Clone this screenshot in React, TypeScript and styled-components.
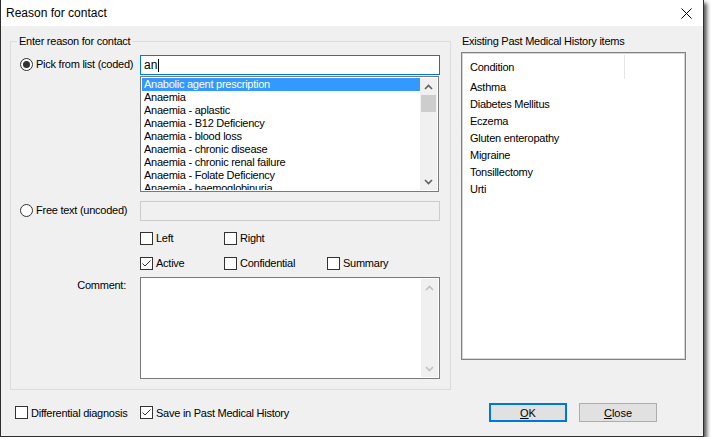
import React from 'react';
import styled, { createGlobalStyle } from 'styled-components';

const GlobalStyle = createGlobalStyle`
  html, body {
    margin: 0;
    padding: 0;
    background: #ffffff;
  }
  body {
    font-family: "Liberation Sans", Arial, sans-serif;
    font-size: 11px;
    letter-spacing: -0.25px;
    color: #000;
  }
  * {
    box-sizing: border-box;
  }
`;

const Window = styled.div`
  width: 704px;
  height: 437px;
  display: flex;
  flex-direction: column;
  background: #f0f0f0;
  border: 1px solid #2e2e2e;
  border-top: none;
  box-shadow: 3px 3px 4px rgba(0, 0, 0, 0.65);
`;

const TitleBar = styled.div`
  height: 26px;
  flex-shrink: 0;
  display: flex;
  align-items: center;
  justify-content: space-between;
  padding: 0 11px 0 5px;
  background: #ffffff;
  font-size: 12px;
  letter-spacing: 0;
`;

const Body = styled.div`
  flex: 1;
  display: flex;
  flex-direction: column;
  padding: 8px 0 0 9px;
`;

const MainRow = styled.div`
  display: flex;
  gap: 10px;
  align-items: flex-start;
`;

const GroupBox = styled.fieldset`
  margin: 0;
  padding: 0;
  min-width: 0;
  width: 441px;
  height: 356px;
  border: 1px solid #dcdcdc;
`;

const GroupLegend = styled.legend`
  margin-left: 6px;
  padding: 0 2px;
  line-height: 14px;
`;

const Form = styled.div`
  display: flex;
  flex-direction: column;
  padding: 7px 0 0 9px;
`;

const FormRow = styled.div<{ $mt?: number }>`
  display: grid;
  grid-template-columns: 120px 300px;
  align-items: start;
  margin-top: ${({ $mt }) => $mt ?? 0}px;
`;

const OptionLabel = styled.label`
  height: 20px;
  display: flex;
  align-items: center;
  gap: 3px;
  margin-top: -1px;
  white-space: nowrap;
`;

const RadioDot = styled.span<{ $on?: boolean }>`
  width: 13px;
  height: 13px;
  border-radius: 50%;
  border: 1px solid #333;
  background: #fff;
  display: flex;
  align-items: center;
  justify-content: center;
  &::after {
    content: '';
    width: 7px;
    height: 7px;
    border-radius: 50%;
    background: #333;
    display: ${({ $on }) => ($on ? 'block' : 'none')};
  }
`;

const Combo = styled.div`
  display: flex;
  flex-direction: column;
`;

const TextBox = styled.div<{ $focused?: boolean; $disabled?: boolean }>`
  height: 20px;
  display: flex;
  align-items: center;
  padding-left: 3px;
  border: 1px solid ${({ $focused, $disabled }) =>
    $focused ? '#0078d7' : $disabled ? '#cccccc' : '#7a7a7a'};
  background: ${({ $disabled }) => ($disabled ? '#f0f0f0' : '#fff')};
  font-size: 12px;
  letter-spacing: 0;
`;

const Caret = styled.span`
  width: 1px;
  height: 13px;
  background: #000;
  margin-left: 1px;
`;

const DropList = styled.div`
  width: 299px;
  height: 116px;
  margin-top: 1px;
  border: 1px solid #7a7a7a;
  background: #fff;
  display: flex;
  padding: 1px;
  overflow: hidden;
`;

const DropItems = styled.div`
  flex: 1;
  overflow: hidden;
`;

const DropItem = styled.div<{ $selected?: boolean }>`
  height: 13px;
  line-height: 13px;
  padding-left: 2px;
  white-space: nowrap;
  background: ${({ $selected }) => ($selected ? '#3399ff' : 'transparent')};
  color: ${({ $selected }) => ($selected ? '#fff' : '#000')};
`;

const ScrollBar = styled.div`
  width: 17px;
  display: flex;
  flex-direction: column;
  background: #f0f0f0;
`;

const ScrollArrow = styled.div`
  height: 17px;
  display: flex;
  align-items: center;
  justify-content: center;
`;

const ScrollTrack = styled.div`
  flex: 1;
  display: flex;
  flex-direction: column;
  align-items: center;
`;

const ScrollThumb = styled.div`
  width: 15px;
  height: 17px;
  background: #cdcdcd;
`;

const CheckRow = styled.div`
  display: grid;
  grid-template-columns: 84px 103px auto;
  height: 16px;
  align-items: center;
`;

const CheckLabel = styled.label<{ $width?: number }>`
  display: flex;
  align-items: center;
  gap: 3px;
  white-space: nowrap;
  ${({ $width }) => ($width ? `width: ${$width}px;` : '')}
`;

const Box = styled.span`
  width: 13px;
  height: 13px;
  border: 1px solid #333;
  background: #fff;
  display: flex;
  align-items: center;
  justify-content: center;
`;

const FieldLabel = styled.div`
  text-align: right;
  padding: 2px 14px 0 0;
`;

const CommentBox = styled.div`
  height: 102px;
  border: 1px solid #7a7a7a;
  background: #fff;
  display: flex;
  justify-content: flex-end;
  padding: 1px;
`;

const SidePanel = styled.div`
  width: 225px;
  display: flex;
  flex-direction: column;
`;

const SideTitle = styled.div`
  height: 14px;
  line-height: 14px;
  margin-left: 1px;
  white-space: nowrap;
`;

const ListView = styled.div`
  height: 308px;
  margin-top: 4px;
  border: 1px solid #828282;
  box-shadow: inset 0 0 0 1px #d4d4d4;
  background: #fff;
  padding: 1px;
`;

const ListHeader = styled.div`
  height: 25px;
  display: flex;
`;

const HeaderCell = styled.div`
  width: 162px;
  display: flex;
  align-items: center;
  padding: 0 0 1px 7px;
  border-right: 1px solid #e5e5e5;
  margin: 1px 0 0;
`;

const ListRow = styled.div`
  height: 17px;
  line-height: 17px;
  padding-left: 7px;
`;

const Footer = styled.div`
  display: flex;
  align-items: center;
  height: 19px;
  margin-top: 13px;
  padding: 0 46px 0 5px;
`;

const Buttons = styled.div`
  margin-left: auto;
  display: flex;
  gap: 12px;
`;

const PushButton = styled.button<{ $default?: boolean }>`
  width: 78px;
  height: 19px;
  padding: 0;
  font: inherit;
  color: #000;
  background: #e1e1e1;
  border: 1px solid ${({ $default }) => ($default ? '#0078d7' : '#adadad')};
  box-shadow: ${({ $default }) => ($default ? 'inset 0 0 0 1px #0078d7' : 'none')};
  u {
    text-decoration: underline;
  }
`;

function CloseGlyph() {
  return (
    <svg width="11" height="11" viewBox="0 0 11 11">
      <path d="M0.5 0.5 L10.5 10.5 M10.5 0.5 L0.5 10.5" stroke="#000" strokeWidth="1" />
    </svg>
  );
}

function Chevron({ up, color }: { up?: boolean; color: string }) {
  return (
    <svg width="9" height="6" viewBox="0 0 9 6">
      <path
        d={up ? 'M1 5 L4.5 1.5 L8 5' : 'M1 1 L4.5 4.5 L8 1'}
        stroke={color}
        strokeWidth="1.6"
        fill="none"
      />
    </svg>
  );
}

function Tick() {
  return (
    <svg width="11" height="11" viewBox="0 0 11 11">
      <path d="M1.5 5.5 L4 8 L9.5 2.5" stroke="#333" strokeWidth="1" fill="none" />
    </svg>
  );
}

function Check({ label, checked, width }: { label: string; checked?: boolean; width?: number }) {
  return (
    <CheckLabel $width={width}>
      <Box>{checked && <Tick />}</Box>
      {label}
    </CheckLabel>
  );
}

const matches = [
  'Anabolic agent prescription',
  'Anaemia',
  'Anaemia - aplastic',
  'Anaemia - B12 Deficiency',
  'Anaemia - blood loss',
  'Anaemia - chronic disease',
  'Anaemia - chronic renal failure',
  'Anaemia - Folate Deficiency',
  'Anaemia - haemoglobinuria',
];

const history = [
  'Asthma',
  'Diabetes Mellitus',
  'Eczema',
  'Gluten enteropathy',
  'Migraine',
  'Tonsillectomy',
  'Urti',
];

export default function App() {
  return (
    <>
      <GlobalStyle />
      <Window>
        <TitleBar>
          <span>Reason for contact</span>
          <CloseGlyph />
        </TitleBar>
        <Body>
          <MainRow>
            <GroupBox>
              <GroupLegend>Enter reason for contact</GroupLegend>
              <Form>
                <FormRow>
                  <OptionLabel>
                    <RadioDot $on />
                    Pick from list (coded)
                  </OptionLabel>
                  <Combo>
                    <TextBox $focused>
                      an
                      <Caret />
                    </TextBox>
                    <DropList>
                      <DropItems>
                        {matches.map((m, i) => (
                          <DropItem key={m} $selected={i === 0}>
                            {m}
                          </DropItem>
                        ))}
                      </DropItems>
                      <ScrollBar>
                        <ScrollArrow>
                          <Chevron up color="#606060" />
                        </ScrollArrow>
                        <ScrollTrack>
                          <ScrollThumb />
                        </ScrollTrack>
                        <ScrollArrow>
                          <Chevron color="#606060" />
                        </ScrollArrow>
                      </ScrollBar>
                    </DropList>
                  </Combo>
                </FormRow>
                <FormRow $mt={9}>
                  <OptionLabel>
                    <RadioDot />
                    Free text (uncoded)
                  </OptionLabel>
                  <TextBox $disabled />
                </FormRow>
                <FormRow $mt={9}>
                  <div />
                  <CheckRow>
                    <Check label="Left" />
                    <Check label="Right" />
                  </CheckRow>
                </FormRow>
                <FormRow $mt={9}>
                  <div />
                  <CheckRow>
                    <Check label="Active" checked />
                    <Check label="Confidential" />
                    <Check label="Summary" />
                  </CheckRow>
                </FormRow>
                <FormRow $mt={6}>
                  <FieldLabel>Comment:</FieldLabel>
                  <CommentBox>
                    <ScrollBar>
                      <ScrollArrow>
                        <Chevron up color="#c0c0c0" />
                      </ScrollArrow>
                      <ScrollTrack />
                      <ScrollArrow>
                        <Chevron color="#c0c0c0" />
                      </ScrollArrow>
                    </ScrollBar>
                  </CommentBox>
                </FormRow>
              </Form>
            </GroupBox>
            <SidePanel>
              <SideTitle>Existing Past Medical History items</SideTitle>
              <ListView>
                <ListHeader>
                  <HeaderCell>Condition</HeaderCell>
                </ListHeader>
                {history.map((h) => (
                  <ListRow key={h}>{h}</ListRow>
                ))}
              </ListView>
            </SidePanel>
          </MainRow>
          <Footer>
            <Check label="Differential diagnosis" width={125} />
            <Check label="Save in Past Medical History" checked />
            <Buttons>
              <PushButton $default>
                <u>O</u>K
              </PushButton>
              <PushButton>
                <u>C</u>lose
              </PushButton>
            </Buttons>
          </Footer>
        </Body>
      </Window>
    </>
  );
}
